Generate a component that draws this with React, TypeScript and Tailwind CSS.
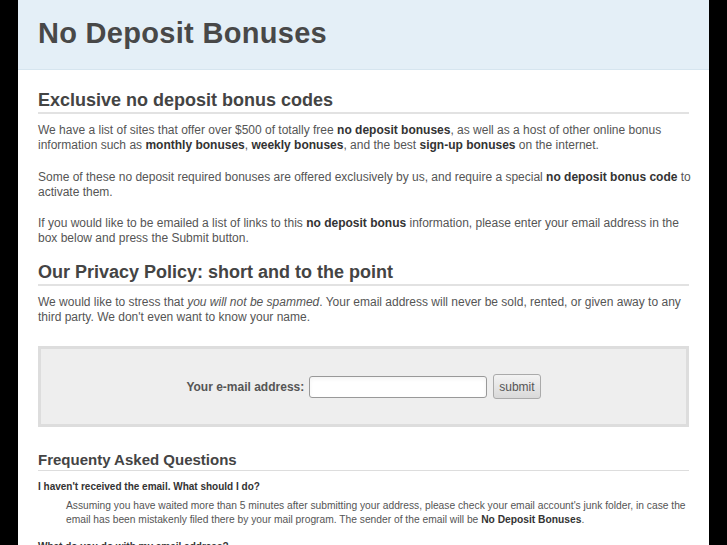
import React from 'react';

const App: React.FC = () => {
  return (
    <div className="min-h-screen bg-black" style={{ fontFamily: '"Liberation Sans", Arial, sans-serif' }}>
      <div className="mx-auto w-[691px] bg-white min-h-screen">
        <div className="h-[70px] bg-[#e4eff7] border-b border-[#d6e5ef] px-[20px] flex items-center">
          <h1 className="text-[29px] font-bold text-[#484848] tracking-[0.3px] pb-[2px]">No Deposit Bonuses</h1>
        </div>

        <div className="px-[20px] pt-[19px] text-[#555] whitespace-nowrap">
          <h2 className="text-[18px] font-bold text-[#444] leading-[22px] pb-[1px] border-b-2 border-[#e2e2e2]">
            Exclusive no deposit bonus codes
          </h2>
          <div className="text-[12px] leading-[15px] pt-[9px]">
            <p className="mb-[17px]">
              We have a list of sites that offer over $500 of totally free <b className="text-[#333]">no deposit bonuses</b>, as well as a host of other online bonus
              <br />
              information such as <b className="text-[#333]">monthly bonuses</b>, <b className="text-[#333]">weekly bonuses</b>, and the best <b className="text-[#333]">sign-up bonuses</b> on the internet.
            </p>
            <p className="mb-[16px]">
              Some of these no deposit required bonuses are offered exclusively by us, and require a special <b className="text-[#333]">no deposit bonus code</b> to
              <br />
              activate them.
            </p>
            <p className="mb-[15px]">
              If you would like to be emailed a list of links to this <b className="text-[#333]">no deposit bonus</b> information, please enter your email address in the
              <br />
              box below and press the Submit button.
            </p>
          </div>

          <h2 className="text-[18px] font-bold text-[#444] leading-[22px] pb-[1px] border-b-2 border-[#e2e2e2]">
            Our Privacy Policy: short and to the point
          </h2>
          <p className="text-[12px] leading-[15px] pt-[9px]">
            We would like to stress that <i>you will not be spammed</i>. Your email address will never be sold, rented, or given away to any
            <br />
            third party. We don't even want to know your name.
          </p>

          <div className="mt-[21px] h-[81px] bg-[#eee] border-[3px] border-[#ddd] flex items-center justify-center gap-[5px]">
            <span className="text-[12px] font-bold text-[#555]">Your e-mail address:</span>
            <input className="w-[178px] h-[22px] bg-white border border-[#999] rounded-[3px] shadow-inner" />
            <button className="ml-[1px] h-[25px] px-[5px] text-[12px] text-[#555] bg-gradient-to-b from-[#f3f3f3] to-[#d9d9d9] border border-[#aaa] rounded-[3px]">
              submit
            </button>
          </div>

          <h3 className="mt-[24px] text-[15px] font-bold text-[#444] leading-[18px] pb-[1px] border-b border-[#ddd]">
            Frequenty Asked Questions
          </h3>
          <p className="pt-[9px] text-[10px] font-bold text-[#333] leading-[14px]">I haven't received the email. What should I do?</p>
          <p className="pl-[28px] pt-[5px] text-[10.25px] leading-[14px]">
            Assuming you have waited more than 5 minutes after submitting your address, please check your email account's junk folder, in case the
            <br />
            email has been mistakenly filed there by your mail program. The sender of the email will be <b className="text-[#333]">No Deposit Bonuses</b>.
          </p>
          <p className="pt-[13px] text-[10px] font-bold text-[#333] leading-[14px]">What do you do with my email address?</p>
        </div>
      </div>
    </div>
  );
};

export default App;
